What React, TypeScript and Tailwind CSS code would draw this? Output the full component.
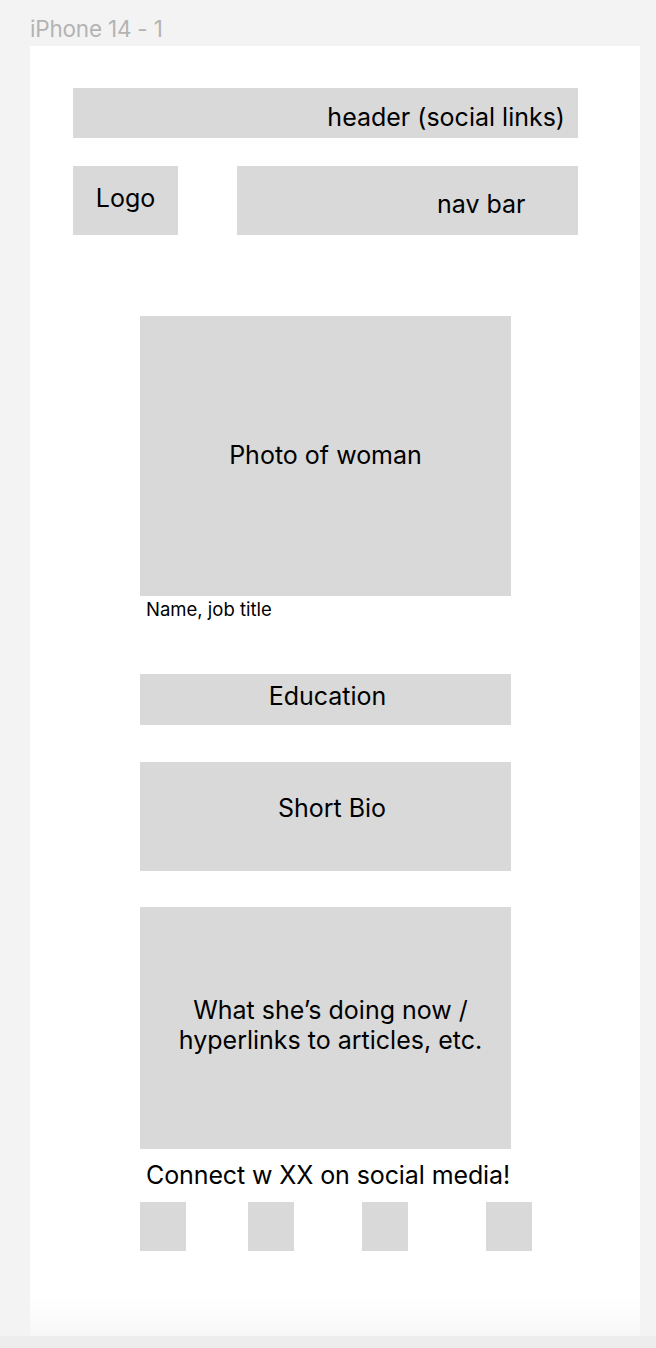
export default function App() {
  const font = { fontFamily: "Inter, 'Noto Sans', sans-serif" };
  return (
    <div className="w-[656px] h-[1348px] bg-[#f3f3f3] flex flex-col overflow-hidden text-black" style={font}>
      <div className="h-[46px] pl-[30px] pt-[15px] text-[22.5px] leading-[28px] text-[#b3b3b3] tracking-[-0.2px]">iPhone 14 - 1</div>
      <div className="ml-[30px] w-[610px] h-[1290px] bg-gradient-to-b from-white from-[97%] to-[#f7f7f7] flex flex-col">
        <div className="ml-[43px] mt-[42px] w-[505px] h-[50px] bg-[#d9d9d9] flex items-center justify-end pr-[13px] pt-[10px] text-[25px]">
          header (social links)
        </div>
        <div className="ml-[43px] mt-[28px] w-[505px] h-[69px] flex gap-[59px]">
          <div className="w-[105px] h-full bg-[#d9d9d9] flex items-center justify-center pb-[3px] text-[25px]">Logo</div>
          <div className="flex-1 h-full bg-[#d9d9d9] flex items-center pl-[200px] pt-[9px] text-[25px]">nav bar</div>
        </div>
        <div className="ml-[110px] mt-[81px] w-[371px] flex flex-col">
          <div className="h-[280px] bg-[#d9d9d9] flex items-center justify-center text-[25px]">Photo of woman</div>
          <div className="pl-[6px] pt-[1px] text-[18.5px] leading-[24px]">Name, job title</div>
          <div className="mt-[53px] h-[51px] bg-[#d9d9d9] flex items-center justify-center pl-[4px] pb-[6px] text-[25px]">Education</div>
          <div className="mt-[37px] h-[109px] bg-[#d9d9d9] flex items-start justify-center pl-[13px] pt-[28px] text-[25px]">Short Bio</div>
          <div className="mt-[36px] h-[242px] bg-[#d9d9d9] flex items-center justify-center pl-[10px] pb-[6px] text-[25px] leading-[30px] text-center">
            <div>What she’s doing now /<br />hyperlinks to articles, etc.</div>
          </div>
          <div className="pl-[6px] pt-[11px] text-[25px] leading-[30px] whitespace-nowrap tracking-[-0.1px]">Connect w XX on social media!</div>
          <div className="mt-[12px] flex">
            <div className="shrink-0 w-[46px] h-[49px] bg-[#d9d9d9]" />
            <div className="shrink-0 ml-[62px] w-[46px] h-[49px] bg-[#d9d9d9]" />
            <div className="shrink-0 ml-[68px] w-[46px] h-[49px] bg-[#d9d9d9]" />
            <div className="shrink-0 ml-[78px] w-[46px] h-[49px] bg-[#d9d9d9]" />
          </div>
        </div>
      </div>
      <div className="h-[12px] bg-[#ededed]" />
    </div>
  );
}
